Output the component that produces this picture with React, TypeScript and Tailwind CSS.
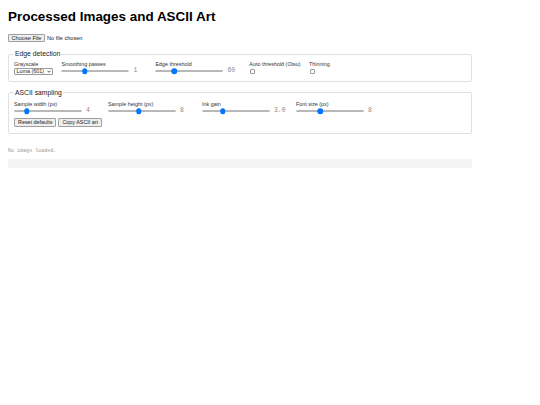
import { FC } from 'react';

const sans = "font-['Liberation_Sans',Arial,sans-serif]";
const mono = "font-['Liberation_Mono','Courier_New',monospace]";

interface SliderProps {
  label: string;
  pos: number;
  value: string;
}

const Slider: FC<SliderProps> = ({ label, pos, value }) => (
  <div className="flex flex-col">
    <label className="text-[5.4px] leading-[6px] text-[#333]">{label}</label>
    <div className="flex items-center gap-[4px] h-[8px]">
      <div className="relative w-[68px] h-[2px] rounded-full bg-[#f0f0f0] border-[0.5px] border-[#b8b8b8]">
        <div className="h-full rounded-full bg-[#0075ff]" style={{ width: `${pos * 100}%` }} />
        <div
          className="absolute top-1/2 w-[5.5px] h-[5.5px] -translate-x-1/2 -translate-y-1/2 rounded-full bg-[#0075ff]"
          style={{ left: `${pos * 100}%` }}
        />
      </div>
      <span className={`${mono} min-w-[13.6px] text-[6.4px] leading-[8px] text-[#8a8a8a]`}>{value}</span>
    </div>
  </div>
);

const Check: FC<{ label: string }> = ({ label }) => (
  <div className="flex flex-col">
    <label className="text-[5.4px] leading-[6px] text-[#333]">{label}</label>
    <div className="flex items-center h-[8px] pl-[1px]">
      <div className="w-[5px] h-[5px] rounded-[1px] border-[0.8px] border-[#9a9a9a] bg-white" />
    </div>
  </div>
);

const Btn: FC<{ children: string }> = ({ children }) => (
  <button className="h-[9px] px-[3px] text-[5.4px] leading-[7px] text-[#222] bg-[#efefef] border-[0.8px] border-[#a0a0a0] rounded-[1px]">
    {children}
  </button>
);

const App: FC = () => {
  return (
    <div className={`${sans} min-h-[405px] w-[540px] bg-white pl-[8px] pt-[9px] text-black`}>
      <h1 className="text-[13.44px] leading-[15.5px] font-bold">Processed Images and ASCII Art</h1>

      <div className="mt-[9.5px] flex items-center gap-[2px] h-[8px]">
        <button className="h-[8px] w-[37px] text-[5.6px] leading-[6px] text-[#222] bg-[#efefef] border-[0.8px] border-[#a0a0a0] rounded-[1px]">
          Choose File
        </button>
        <span className="text-[5.6px] leading-[6px] text-[#222]">No file chosen</span>
      </div>

      <fieldset className="mt-[8px] w-[464px] border border-[#e0e0e0] rounded-[2px] px-[5px] pt-[3px] pb-[6px]">
        <legend className="px-[1px] text-[6.8px] leading-[8px] text-[#222]">Edge detection</legend>
        <div className="flex flex-wrap gap-x-[8.4px]">
          <div className="flex flex-col">
            <label className="text-[5.4px] leading-[6px] text-[#333]">Grayscale</label>
            <div className="flex items-center h-[8px]">
              <div className="flex items-center justify-between w-[39px] h-[7px] px-[1.5px] border-[0.8px] border-[#9a9a9a] rounded-[1px] bg-white">
                <span className="text-[5.4px] leading-[6px] text-[#222]">Luma (601)</span>
                <svg viewBox="0 0 10 6" className="w-[4px] h-[3px]">
                  <path d="M1 1 L5 5 L9 1" fill="none" stroke="#222" strokeWidth="2" />
                </svg>
              </div>
            </div>
          </div>
          <Slider label="Smoothing passes" pos={0.34} value="1" />
          <Slider label="Edge threshold" pos={0.27} value="60" />
          <Check label="Auto threshold (Otsu)" />
          <Check label="Thinning" />
        </div>
      </fieldset>

      <fieldset className="mt-[6.5px] w-[464px] border border-[#e0e0e0] rounded-[2px] px-[5px] pt-[4.8px] pb-[6px]">
        <legend className="px-[1px] text-[6.8px] leading-[8px] text-[#222]">ASCII sampling</legend>
        <div className="flex flex-wrap gap-x-[8.4px]">
          <Slider label="Sample width (px)" pos={0.18} value="4" />
          <Slider label="Sample height (px)" pos={0.45} value="8" />
          <Slider label="Ink gain" pos={0.3} value="3.0" />
          <Slider label="Font size (px)" pos={0.35} value="8" />
        </div>
        <div className="mt-[3px] flex gap-[2px]">
          <Btn>Reset defaults</Btn>
          <Btn>Copy ASCII art</Btn>
        </div>
      </fieldset>

      <p className={`${mono} mt-[14px] text-[5.04px] leading-[6px] text-[#999]`}>No image loaded.</p>
      <pre className="mt-[5px] w-[464px] h-[8.5px] bg-[#f4f4f4]" />
    </div>
  );
};

export default App;
